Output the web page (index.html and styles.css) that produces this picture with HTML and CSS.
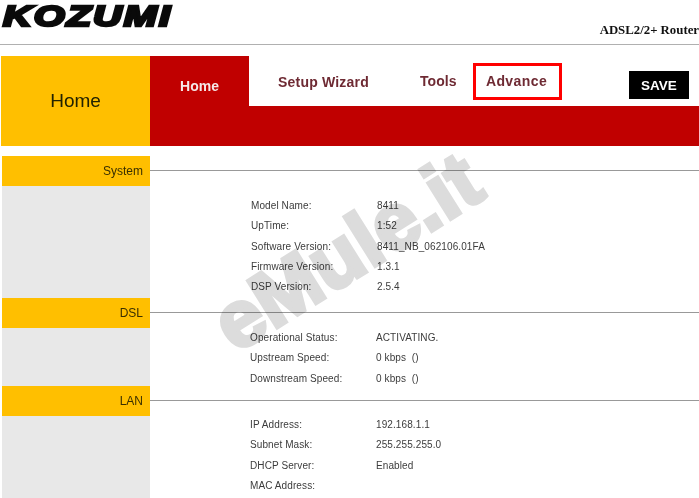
FILE: index.html
```html
<!DOCTYPE html>
<html lang="en">
<head>
    <meta charset="UTF-8">
    <meta name="viewport" content="width=device-width, initial-scale=1.0">
    <title>ADSL2/2+ Router</title>
    <link rel="stylesheet" href="styles.css">
</head>
<body>
    <header class="brand-bar">
        <div class="logo">KOZUMI</div>
        <div class="model">ADSL2/2+ Router</div>
    </header>

    <div class="top-bar">
        <div class="page-title">Home</div>
        <div class="nav">
            <div class="tabs">
                <a class="tab tab-home">Home</a>
                <a class="tab tab-wizard">Setup Wizard</a>
                <a class="tab tab-tools">Tools</a>
                <a class="tab tab-advance">Advance</a>
                <button class="save">SAVE</button>
            </div>
            <div class="band"></div>
        </div>
    </div>

    <main>
        <section class="section section-system">
            <div class="side"><div class="side-label">System</div></div>
            <div class="info">
                <div class="rule"></div>
                <div class="rows">
                    <div class="row"><span>Model Name:</span><span>8411</span></div>
                    <div class="row"><span>UpTime:</span><span>1:52</span></div>
                    <div class="row"><span>Software Version:</span><span>8411_NB_062106.01FA</span></div>
                    <div class="row"><span>Firmware Version:</span><span>1.3.1</span></div>
                    <div class="row"><span>DSP Version:</span><span>2.5.4</span></div>
                </div>
            </div>
        </section>
        <section class="section section-dsl">
            <div class="side"><div class="side-label">DSL</div></div>
            <div class="info">
                <div class="rule"></div>
                <div class="rows">
                    <div class="row"><span>Operational Status:</span><span>ACTIVATING.</span></div>
                    <div class="row"><span>Upstream Speed:</span><span>0 kbps &nbsp;()</span></div>
                    <div class="row"><span>Downstream Speed:</span><span>0 kbps &nbsp;()</span></div>
                </div>
            </div>
        </section>
        <section class="section section-lan">
            <div class="side"><div class="side-label">LAN</div></div>
            <div class="info">
                <div class="rule"></div>
                <div class="rows">
                    <div class="row"><span>IP Address:</span><span>192.168.1.1</span></div>
                    <div class="row"><span>Subnet Mask:</span><span>255.255.255.0</span></div>
                    <div class="row"><span>DHCP Server:</span><span>Enabled</span></div>
                    <div class="row"><span>MAC Address:</span><span></span></div>
                </div>
            </div>
        </section>
    </main>

    <div class="watermark">eMule.it</div>
</body>
</html>
```

FILE: styles.css
```css
html, body {
    height: 498px;
    overflow: hidden;
}
body {
    margin: 0;
    position: relative;
    font-family: "Liberation Sans", Arial, sans-serif;
    background-color: #ffffff;
    color: #3c3c3c;
}
.brand-bar {
    height: 44px;
    display: flex;
    justify-content: space-between;
    border-bottom: 1px solid #b0b0b0;
}
.logo {
    width: 125px;
    height: 34px;
    margin-left: 3px;
    font-size: 29px;
    line-height: 33px;
    font-weight: bold;
    font-style: italic;
    color: #0a0a0a;
    -webkit-text-stroke: 2.6px #0a0a0a;
    letter-spacing: 1.5px;
    white-space: nowrap;
    transform-origin: left top;
    transform: scaleX(1.37);
}
.model {
    margin-top: 23px;
    font-family: "Liberation Serif", "Times New Roman", serif;
    font-size: 12.8px;
    line-height: 14px;
    font-weight: bold;
    color: #111111;
    white-space: nowrap;
}
.top-bar {
    display: flex;
    height: 90px;
    margin: 11px 0 0 1px;
}
.page-title {
    width: 149px;
    background-color: #ffbf00;
    color: #222200;
    font-size: 19px;
    display: flex;
    align-items: center;
    justify-content: center;
}
.nav {
    flex: 1;
    display: flex;
    flex-direction: column;
}
.tabs {
    height: 50px;
    position: relative;
    display: flex;
    align-items: center;
}
.tab {
    font-size: 14px;
    font-weight: bold;
    color: #6e2a33;
    white-space: nowrap;
}
.tab-home {
    width: 99px;
    height: 50px;
    line-height: 60px;
    text-align: center;
    color: #f5e8e8;
    background-color: #c00000;
}
.tab-wizard {
    margin-left: 29px;
    padding-top: 2px;
    letter-spacing: 0.2px;
}
.tab-tools {
    margin-left: 51px;
    letter-spacing: 0.1px;
}
.tab-advance {
    position: absolute;
    left: 323px;
    top: 7px;
    width: 81px;
    height: 31px;
    padding-right: 2px;
    line-height: 31px;
    text-align: center;
    border: 3px solid #ff0000;
    letter-spacing: 0.4px;
}
.save {
    position: absolute;
    left: 479px;
    top: 15px;
    width: 60px;
    height: 28px;
    padding: 0;
    border: none;
    background-color: #000000;
    color: #ffffff;
    font-family: inherit;
    font-size: 13.5px;
    font-weight: bold;
}
.band {
    height: 40px;
    background-color: #c00000;
}
main {
    margin: 10px 0 0 2px;
}
.section {
    display: flex;
}
.section-system {
    height: 142px;
}
.section-dsl {
    height: 88px;
}
.section-lan {
    height: 112px;
}
.side {
    width: 148px;
    background-color: #e8e8e8;
}
.side-label {
    height: 30px;
    line-height: 30px;
    padding-right: 7px;
    text-align: right;
    font-size: 12px;
    color: #3a3000;
    background-color: #ffbf00;
}
.info {
    flex: 1;
}
.rule {
    height: 1px;
    margin-top: 14px;
    background-color: #999999;
}
.rows {
    padding-left: 100px;
    font-size: 10px;
}
.section-system .rows {
    padding-top: 25px;
    padding-left: 101px;
}
.section-dsl .rows {
    padding-top: 15px;
}
.section-lan .rows {
    padding-top: 14px;
}
.row {
    display: flex;
    height: 20.25px;
    line-height: 20px;
    letter-spacing: 0.1px;
}
.row span:first-child {
    width: 126px;
}
.watermark {
    position: absolute;
    left: 198px;
    top: 202px;
    font-size: 80px;
    line-height: 100px;
    font-weight: bold;
    color: #dcdcdc;
    -webkit-text-stroke: 4px #dcdcdc;
    mix-blend-mode: multiply;
    white-space: nowrap;
    transform: rotate(-32deg);
}
```
